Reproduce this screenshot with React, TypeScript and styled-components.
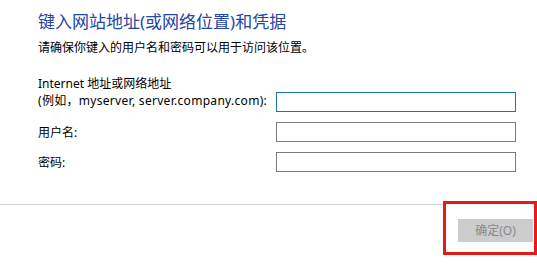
import * as React from 'react';
import styled, { createGlobalStyle } from 'styled-components';

const GlobalStyle = createGlobalStyle`
  html, body {
    margin: 0;
    padding: 0;
    background: #ffffff;
  }
  body {
    font-family: "Noto Sans", "Noto Sans CJK SC", sans-serif;
    color: #000000;
  }
`

const Dialog = styled.div`
  width: 537px;
  height: 273px;
  display: flex;
  flex-direction: column;
  background: #ffffff;
`

const Content = styled.div`
  padding: 10px 0 0 38px;
  display: flex;
  flex-direction: column;
`

const Title = styled.h1`
  margin: 0;
  font-size: 17px;
  font-weight: normal;
  line-height: 24px;
  color: #2646a4;
`

const Hint = styled.p`
  margin: 5px 0 0;
  font-size: 12px;
  line-height: 18px;
`

const Form = styled.div`
  margin-top: 18px;
  display: grid;
  grid-template-columns: 238px 240px;
  row-gap: 10px;
  align-items: center;
`

const Label = styled.label<{ $multi?: boolean }>`
  font-size: 12px;
  line-height: 17px;
  align-self: ${p => (p.$multi ? 'end' : 'center')};
  padding-bottom: ${p => (p.$multi ? '3px' : '0')};
`

const Example = styled.span`
  letter-spacing: 0.3px;
`

const Field = styled.input<{ $focused?: boolean }>`
  box-sizing: border-box;
  width: 240px;
  height: 20px;
  margin: 0;
  padding: 0 4px;
  border: 1px solid ${p => (p.$focused ? '#1a72bf' : '#7a7a7a')};
  border-radius: 0;
  background: #ffffff;
  outline: none;
  font: inherit;
  font-size: 12px;
  align-self: end;
`

const Footer = styled.div`
  margin-top: 29px;
  display: flex;
  align-items: flex-start;
`

const Divider = styled.div`
  flex: 1;
  margin-top: 3px;
  border-top: 1px solid #cfcfcf;
`

const Highlight = styled.div`
  width: 94px;
  box-sizing: border-box;
  border: 3px solid #e41b17;
  padding: 14px 1px 10px 12px;
`

const Button = styled.button`
  box-sizing: border-box;
  width: 75px;
  height: 23px;
  margin: 0;
  padding: 0;
  border: 1px solid #cccccc;
  background: #cccccc;
  color: #8a8a8a;
  font: inherit;
  font-size: 12px;
  line-height: 21px;
`

export default function App() {
  return (
    <>
      <GlobalStyle />
      <Dialog>
        <Content>
          <Title>键入网站地址(或网络位置)和凭据</Title>
          <Hint>请确保你键入的用户名和密码可以用于访问该位置。</Hint>
          <Form>
            <Label $multi>
              Internet 地址或网络地址
              <br />
              <Example>(例如，myserver, server.company.com):</Example>
            </Label>
            <Field $focused />
            <Label>用户名:</Label>
            <Field />
            <Label>密码:</Label>
            <Field type="password" />
          </Form>
        </Content>
        <Footer>
          <Divider />
          <Highlight>
            <Button disabled>确定(O)</Button>
          </Highlight>
        </Footer>
      </Dialog>
    </>
  );
}
